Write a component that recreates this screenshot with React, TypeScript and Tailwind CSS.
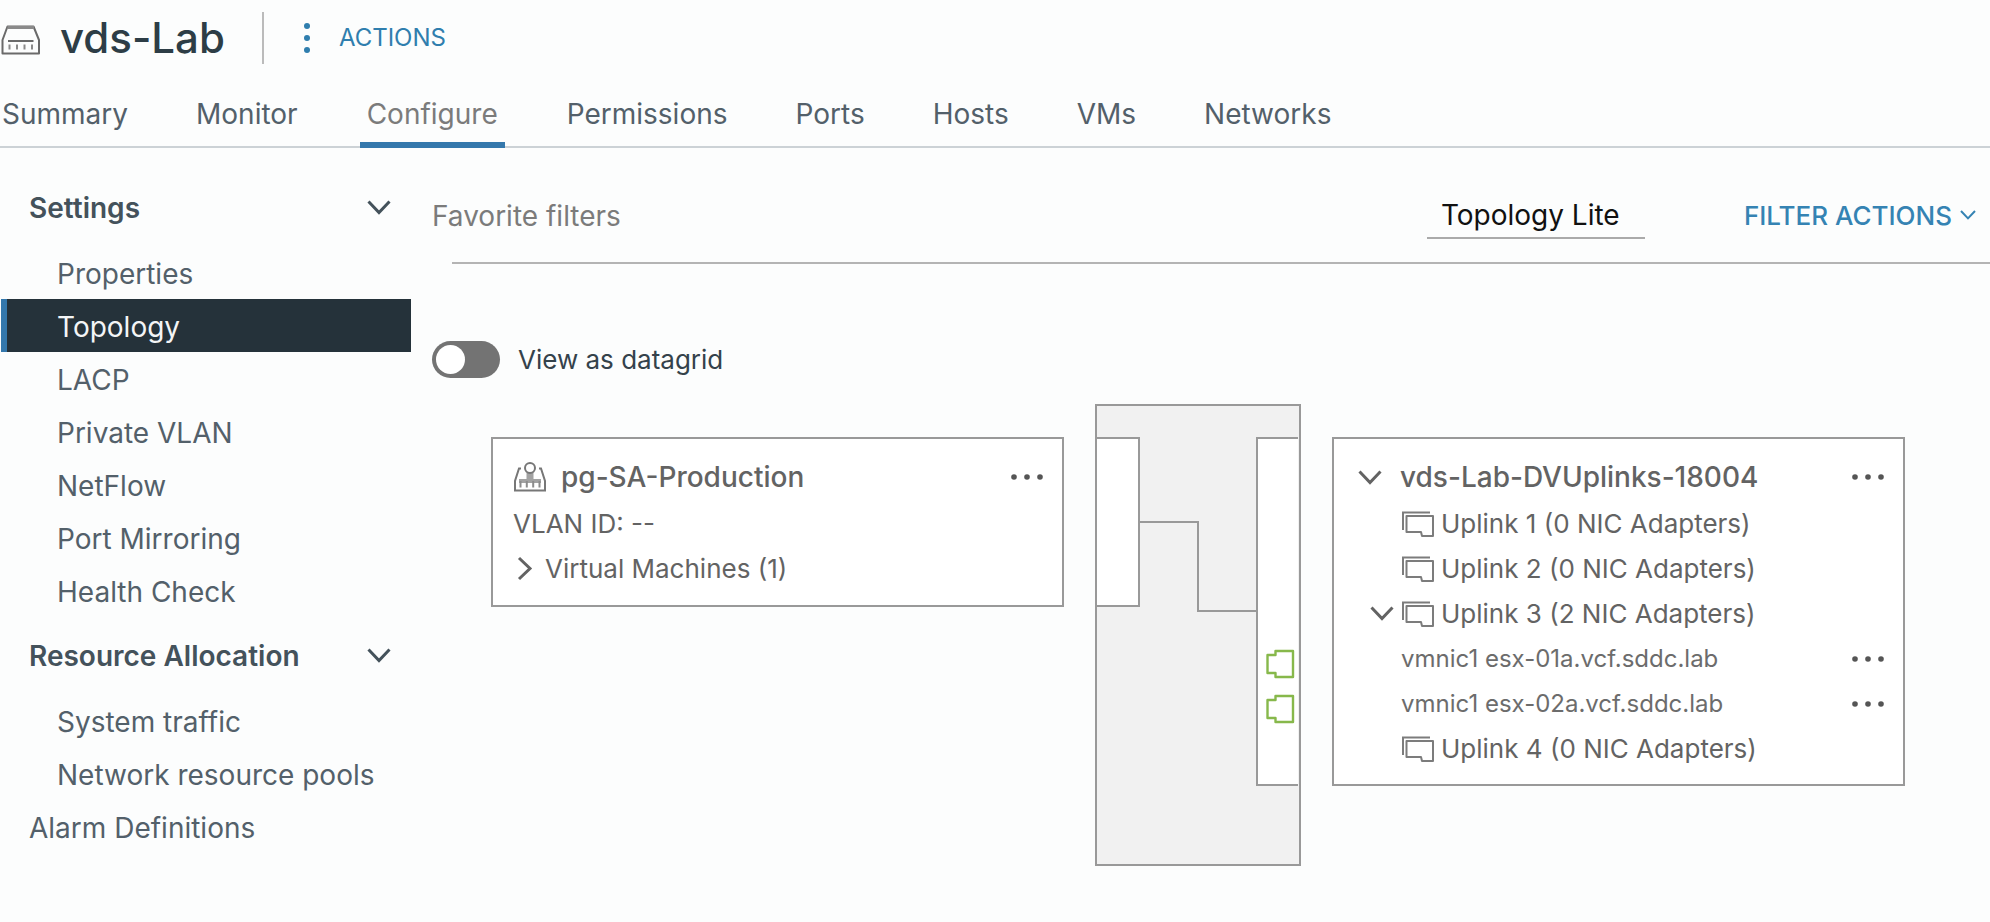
import { useState } from "react";

const tabs = ["Summary", "Monitor", "Configure", "Permissions", "Ports", "Hosts", "VMs", "Networks"];

const sections = [
  {
    title: "Settings",
    items: ["Properties", "Topology", "LACP", "Private VLAN", "NetFlow", "Port Mirroring", "Health Check"],
  },
  { title: "Resource Allocation", items: ["System traffic", "Network resource pools"] },
];

function Chevron({ className, stroke = 3 }: { className: string; stroke?: number }) {
  return (
    <svg viewBox="0 0 24 15" className={className} fill="none" stroke="currentColor" strokeWidth={stroke} aria-hidden="true">
      <path d="M1.5 1.5 12 12.5 22.5 1.5" />
    </svg>
  );
}

function SwitchIcon() {
  return (
    <svg viewBox="0 0 40 30" className="mt-1 h-[30px] w-10 shrink-0" fill="none" stroke="#6a6a6a" strokeWidth="2" aria-hidden="true">
      <path d="M6.500 1.5h26L38 15v13.500H1.500V15z" strokeLinejoin="round" />
      <path d="M6.500 2.500h26.500" stroke="#8a8a8a" strokeWidth="3" />
      <path d="M7 16h25.500" />
      <path d="M8.500 19.500v5M16 19.500v5M23.500 19.500v5M31 19.500v5" stroke="#8a8a8a" />
    </svg>
  );
}

function PortGroupIcon() {
  return (
    <svg viewBox="0 0 34 30" className="h-[30px] w-[34px] shrink-0" fill="none" stroke="#777" strokeWidth="2" aria-hidden="true">
      <path d="M8 6.500H6L2 19v9.500h30V19L28 6.500h-2" />
      <path d="M13.500 10.500h7V17H28v4H6v-4h7.500z" fill="#a2a2a2" stroke="none" />
      <circle cx="17" cy="6" r="5" fill="#fff" />
      <path d="M7.500 19v6.500M13.800 19v6.500M20.200 19v6.500M26.500 19v6.500" stroke="#8c8c8c" />
    </svg>
  );
}

function UplinkIcon() {
  return (
    <svg viewBox="0 0 34 26" className="h-[26px] w-[34px] shrink-0" fill="none" stroke="#7c7c7c" strokeWidth="2" aria-hidden="true">
      <path d="M29 1.500H2V19" />
      <path d="M5.500 5H32V25H21l-1-4H5.500z" strokeLinejoin="round" />
    </svg>
  );
}

function MoreButton({ label }: { label: string }) {
  return (
    <button type="button" aria-label={label} className="ml-auto shrink-0 text-[#555]">
      <svg viewBox="0 0 34 8" className="h-2 w-[34px]" fill="currentColor" aria-hidden="true">
        <circle cx="4" cy="4" r="2.800" />
        <circle cx="17" cy="4" r="2.800" />
        <circle cx="30" cy="4" r="2.800" />
      </svg>
    </button>
  );
}

function UplinkRow({ name, count, open = false }: { name: string; count: number; open?: boolean }) {
  return (
    <li className="flex h-[45px] items-center">
      <span className="flex w-[31px] shrink-0">
        {open && (
          <button type="button" aria-label={`Collapse ${name}`}>
            <Chevron className="h-[15px] w-6" />
          </button>
        )}
      </span>
      <UplinkIcon />
      <span className="ml-1.5 text-[26px]">
        {name} ({count} NIC Adapters)
      </span>
    </li>
  );
}

function NicRow({ name }: { name: string }) {
  return (
    <li className="flex h-[45px] items-center pl-[31px]">
      <span className="text-2xl text-[#6c6c6c]">{name}</span>
      <MoreButton label={`Actions for ${name}`} />
    </li>
  );
}

function SwitchFabric() {
  return (
    <svg viewBox="0 0 206 462" className="h-[462px] w-[206px]" fill="none" stroke="#999" strokeWidth="2" aria-label="Switch connections" role="img">
      <rect x="1" y="1" width="204" height="460" fill="#f1f1f1" />
      <path d="M2 34H44V202H2" fill="#fff" />
      <path d="M203 34H162V381H203" fill="#fff" />
      <path d="M44 118H103V207H162" />
      <g stroke="#87b84b" strokeWidth="2.400" strokeLinejoin="round" fill="#fff">
        <path d="M180.500 247h17.500v26h-17.500v-4h-8v-18h8z" />
        <path d="M180.500 292h17.500v26h-17.500v-4h-8v-18h8z" />
      </g>
    </svg>
  );
}

export default function App() {
  const [datagrid, setDatagrid] = useState(false);

  return (
    <div className="min-h-screen bg-[#fcfdfd] font-['Inter','Liberation_Sans',sans-serif] text-[28px] text-[#53606a]">
      <header className="flex h-[76px] items-center pl-px">
        <SwitchIcon />
        <h1 className="ml-[19px] text-[42px] leading-none font-medium text-[#2d3d46]">vds-Lab</h1>
        <div className="ml-[37px] h-[52px] w-0.5 bg-[#bbb]" />
        <button type="button" className="ml-10 flex items-center gap-[29px] text-2xl text-[#2f7eae]">
          <svg viewBox="0 0 6 30" className="h-[30px] w-1.5" fill="currentColor" aria-hidden="true">
            <circle cx="3" cy="3" r="3" />
            <circle cx="3" cy="15" r="3" />
            <circle cx="3" cy="27" r="3" />
          </svg>
          ACTIONS
        </button>
      </header>

      <nav aria-label="Object" className="flex h-[72px] gap-14 border-b-2 border-[#ccd2d6] pl-0.5">
        {tabs.map((tab) => (
          <a
            key={tab}
            href="#"
            aria-current={tab === "Configure" ? "page" : undefined}
            className={
              tab === "Configure"
                ? "-mb-0.5 flex items-center border-b-[6px] border-[#3478ac] px-[7px] pt-2.5 text-[#7b7b7b]"
                : "flex items-center px-1.5 pt-1.5 first:pl-0"
            }
          >
            {tab}
          </a>
        ))}
      </nav>

      <div className="flex">
        <nav aria-label="Configure" className="w-[411px] shrink-0 pt-[21px] pl-px">
          {sections.map((section) => (
            <section key={section.title}>
              <button type="button" className="flex h-[77px] w-full items-center justify-between pr-5 pl-7 font-semibold text-[#44525b]">
                {section.title}
                <Chevron className="h-[15px] w-6" stroke={3} />
              </button>
              <ul>
                {section.items.map((item) => (
                  <li key={item}>
                    <a
                      href="#"
                      className={
                        item === "Topology"
                          ? "flex h-[53px] items-center border-l-[6px] border-[#3478ac] bg-[#25323a] pt-0.5 pl-[50px] text-[#f3f5f6]"
                          : "flex h-[53px] items-center pt-0.5 pl-14"
                      }
                    >
                      {item}
                    </a>
                  </li>
                ))}
              </ul>
            </section>
          ))}
          <a href="#" className="flex h-[53px] items-center pt-0.5 pl-7">
            Alarm Definitions
          </a>
        </nav>

        <main className="min-w-0 flex-1 pl-[21px]">
          <div className="flex h-[114px] items-center pt-[22px] pr-[14px]">
            <label htmlFor="favorite-filter" className="text-[#7b7b7b]">
              Favorite filters
            </label>
            <select
              id="favorite-filter"
              className="ml-auto h-[46px] w-[218px] appearance-none rounded-none border-b-2 border-[#aaa] bg-transparent px-3.5 text-[#111]"
            >
              <option>Topology Lite</option>
            </select>
            <button type="button" className="ml-[99px] flex items-center gap-2 pb-0.5 text-[26px] font-medium text-[#3583b3]">
              FILTER ACTIONS
              <Chevron className="h-[10px] w-4" />
            </button>
          </div>
          <hr className="ml-5 border-t-2 border-[#b4b4b4]" />

          <div className="flex h-[140px] items-center gap-[18px] pt-[50px]">
            <input
              id="datagrid"
              type="checkbox"
              role="switch"
              checked={datagrid}
              onChange={() => setDatagrid(!datagrid)}
              className="flex h-[37px] w-[68px] appearance-none items-center rounded-full bg-[#737373] px-1 before:size-[29px] before:rounded-full before:bg-white checked:justify-end checked:bg-[#3478ac]"
            />
            <label htmlFor="datagrid" className="text-[26px] text-[#34424b]">
              View as datagrid
            </label>
          </div>

          <div className="grid grid-cols-[1fr_206px_1fr] items-start gap-[31px] pr-[85px] pl-[59px] text-[#636363]">
            <section className="mt-[33px] h-[170px] border-2 border-[#999] bg-white pt-3.5 pr-[18px] pl-5">
              <div className="flex h-12 items-center">
                <PortGroupIcon />
                <h2 className="ml-3.5 text-[28px] font-medium">pg-SA-Production</h2>
                <MoreButton label="Actions for pg-SA-Production" />
              </div>
              <p className="flex h-[45px] items-center text-[26px]">VLAN ID: --</p>
              <button type="button" className="flex h-[45px] items-center gap-2 text-[26px]">
                <Chevron className="h-[15px] w-6 -rotate-90" />
                Virtual Machines (1)
              </button>
            </section>

            <SwitchFabric />

            <section className="mt-[33px] h-[349px] border-2 border-[#999] bg-white pt-3.5 pr-[18px] pl-6">
              <div className="flex h-12 items-center">
                <button type="button" aria-label="Collapse uplinks">
                  <Chevron className="h-[15px] w-6" />
                </button>
                <h2 className="ml-[18px] text-[28px] font-medium">vds-Lab-DVUplinks-18004</h2>
                <MoreButton label="Actions for vds-Lab-DVUplinks-18004" />
              </div>
              <ul className="pl-3">
                <UplinkRow name="Uplink 1" count={0} />
                <UplinkRow name="Uplink 2" count={0} />
                <UplinkRow name="Uplink 3" count={2} open />
                <NicRow name="vmnic1 esx-01a.vcf.sddc.lab" />
                <NicRow name="vmnic1 esx-02a.vcf.sddc.lab" />
                <UplinkRow name="Uplink 4" count={0} />
              </ul>
            </section>
          </div>
        </main>
      </div>
    </div>
  );
}
